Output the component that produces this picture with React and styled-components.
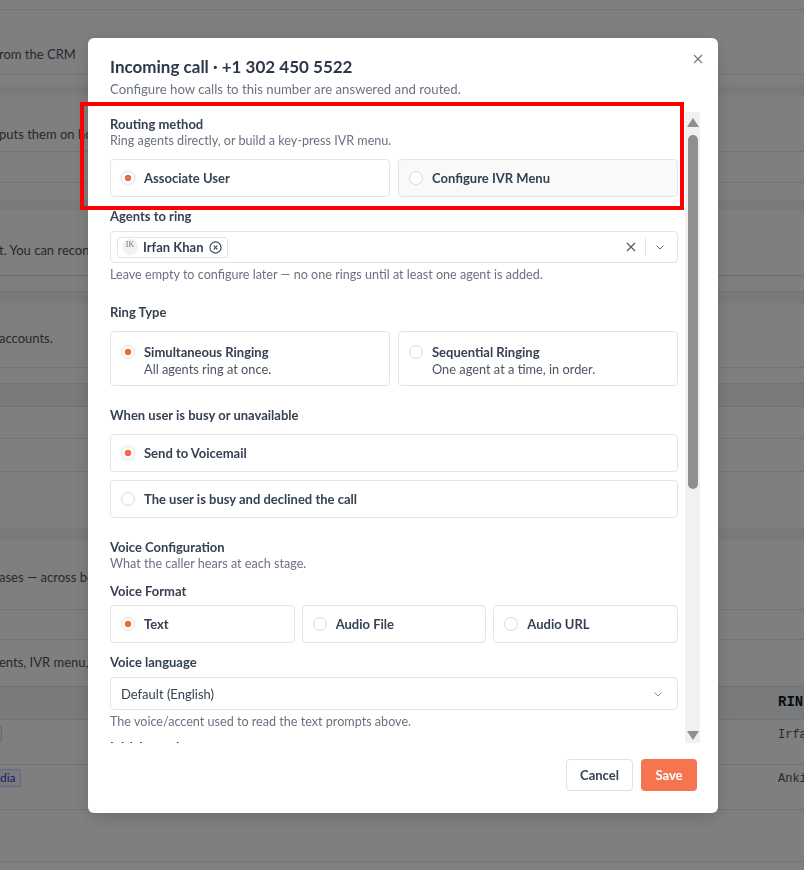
import React from "react";
import styled, { createGlobalStyle } from "styled-components";

const GlobalStyle = createGlobalStyle`
	html, body {
		margin: 0;
		padding: 0;
		height: 100%;
		overflow: hidden;
	}
	body {
		font-family: "Lato", "Liberation Sans", sans-serif;
		color: #364152;
		background: #ffffff;
	}
	* {
		box-sizing: border-box;
	}
`;

// background page rows (dimmed by the overlay)
const bgRows = [
	{ h: 10, line: true },
	{ h: 65, line: true, pt: 36, left: "rom the CRM" },
	{ h: 10 },
	{ h: 10, band: true },
	{ h: 57, line: true, pt: 31, left: "puts them on ho" },
	{ h: 31, line: true },
	{ h: 17 },
	{ h: 10, band: true },
	{ h: 66, line: true, red: true, pt: 32, left: "t. You can recon" },
	{ h: 16, line: true },
	{ h: 11, band: true },
	{ h: 65, line: true, pt: 27, left: "accounts." },
	{ h: 16, line: true },
	{ h: 23, band: true, line: true },
	{ h: 32, line: true },
	{ h: 33, line: true },
	{ h: 56 },
	{ h: 12, band: true },
	{ h: 70, line: true, pt: 29, left: "ases — across bo" },
	{ h: 30, line: true },
	{ h: 47, line: true, pt: 14, left: "ents, IVR menu," },
	{ h: 33, band: true, line: true, pt: 5, right: "RIN", head: true },
	{ h: 45, line: true, pt: 5, badge: " ", right: "Irfan" },
	{ h: 45, line: true, pt: 4, badge: "dia", right: "Anki" },
	{ h: 52, line: true },
	{ h: 8 },
];

const formats = ["Text", "Audio File", "Audio URL"];

const Chevron = ({ color = "#777" }) => (
	<svg width="10" height="10" viewBox="0 0 10 10">
		<path d="M1.5 3.5L5 7L8.5 3.5" stroke={color} strokeWidth="1" fill="none" />
	</svg>
);

export default function App() {
	return (
		<>
			<GlobalStyle />
			<BgPage>
				{bgRows.map((r, i) => (
					<BgRow key={i} $h={r.h} $pt={r.pt} $band={r.band} $line={r.line} $red={r.red}>
						<BgLeft>
							{r.left}
							{r.badge && <BgBadge $empty={r.badge === " "}>{r.badge}</BgBadge>}
						</BgLeft>
						{r.right && <BgRight $head={r.head}>{r.right}</BgRight>}
					</BgRow>
				))}
			</BgPage>

			<Overlay>
				<Modal>
					<CloseButton aria-label="Close">
						<svg width="10" height="10" viewBox="0 0 10 10">
							<path d="M1 1L9 9M9 1L1 9" stroke="#6b7280" strokeWidth="1.1" fill="none" />
						</svg>
					</CloseButton>
					<Header>
						<Title>Incoming call · +1 302 450 5522</Title>
						<Subtitle>Configure how calls to this number are answered and routed.</Subtitle>
					</Header>

					<Body>
						<ScrollView>
							<Label>Routing method</Label>
							<Hint>Ring agents directly, or build a key-press IVR menu.</Hint>
							<OptionGrid $cols={2} $mt={10}>
								<Option>
									<Radio $checked />
									<OptionTitle>Associate User</OptionTitle>
								</Option>
								<Option $muted>
									<Radio />
									<OptionTitle>Configure IVR Menu</OptionTitle>
								</Option>
							</OptionGrid>

							<Label $mt={10}>Agents to ring</Label>
							<MultiSelect $mt={6}>
								<Chip>
									<Avatar>IK</Avatar>
									<ChipName>Irfan Khan</ChipName>
									<svg width="13" height="13" viewBox="0 0 13 13">
										<circle cx="6.5" cy="6.5" r="5.6" stroke="#374151" strokeWidth="1.1" fill="none" />
										<path d="M4.7 4.7L8.3 8.3M8.3 4.7L4.7 8.3" stroke="#374151" strokeWidth="1.1" />
									</svg>
								</Chip>
								<SelectTools>
									<svg width="10" height="10" viewBox="0 0 10 10">
										<path d="M1 1L9 9M9 1L1 9" stroke="#555" strokeWidth="1.1" fill="none" />
									</svg>
									<Divider />
									<Chevron color="#666" />
								</SelectTools>
							</MultiSelect>
							<Hint $mt={4}>
								Leave empty to configure later — no one rings until at least one agent is added.
							</Hint>

							<Label $mt={20}>Ring Type</Label>
							<OptionGrid $cols={2} $mt={10}>
								<Option $tall>
									<Radio $checked $tall />
									<div>
										<OptionTitle>Simultaneous Ringing</OptionTitle>
										<OptionDesc>All agents ring at once.</OptionDesc>
									</div>
								</Option>
								<Option $tall>
									<Radio $tall />
									<div>
										<OptionTitle>Sequential Ringing</OptionTitle>
										<OptionDesc>One agent at a time, in order.</OptionDesc>
									</div>
								</Option>
							</OptionGrid>

							<Label $mt={20}>When user is busy or unavailable</Label>
							<OptionStack $mt={10}>
								<Option>
									<Radio $checked />
									<OptionTitle>Send to Voicemail</OptionTitle>
								</Option>
								<Option>
									<Radio />
									<OptionTitle>The user is busy and declined the call</OptionTitle>
								</Option>
							</OptionStack>

							<Label $mt={20}>Voice Configuration</Label>
							<Hint>What the caller hears at each stage.</Hint>

							<Label $mt={10}>Voice Format</Label>
							<OptionGrid $cols={3} $gap={7} $mt={5}>
								{formats.map((f, i) => (
									<Option key={f}>
										<Radio $checked={i === 0} />
										<OptionTitle>{f}</OptionTitle>
									</Option>
								))}
							</OptionGrid>

							<Label $mt={10}>Voice language</Label>
							<SelectBox $mt={6}>
								<span>Default (English)</span>
								<Chevron color="#8a8f98" />
							</SelectBox>
							<Hint $mt={4}>The voice/accent used to read the text prompts above.</Hint>

							<Label $mt={8}>Initial greeting</Label>
							<TextArea $mt={6} defaultValue="Thanks for calling. Please hold while we connect you." />
							<Hint $mt={4}>Played as soon as the call is answered.</Hint>

							<Label $mt={12}>Voicemail prompt</Label>
							<TextArea $mt={6} defaultValue="Sorry, no one is available. Please leave a message after the tone." />
							<Hint $mt={4}>Played before the caller records a voicemail.</Hint>

							<Label $mt={12}>Busy message</Label>
							<TextArea $mt={6} defaultValue="All our agents are busy right now. Please try again later." />
							<Hint $mt={4}>Played when the call is declined.</Hint>
						</ScrollView>

						<ScrollTrack>
							<ArrowUp />
							<Thumb />
							<ArrowDown />
						</ScrollTrack>
					</Body>

					<Footer>
						<GhostButton>Cancel</GhostButton>
						<PrimaryButton>Save</PrimaryButton>
					</Footer>
				</Modal>
				<Annotation />
			</Overlay>
		</>
	);
}

// * background page

const BgPage = styled.div`
	display: flex;
	flex-direction: column;
	height: 870px;
	overflow: hidden;
	background: #ffffff;
`;

const BgRow = styled.div`
	flex: 0 0 ${(p) => p.$h}px;
	display: flex;
	justify-content: space-between;
	align-items: flex-start;
	padding-top: ${(p) => p.$pt || 0}px;
	background: ${(p) => (p.$band ? "#f3f4f6" : "#ffffff")};
	border-bottom: ${(p) => (p.$line ? `1px solid ${p.$red ? "#f0d4d4" : "#e5e7eb"}` : "none")};
	overflow: hidden;
`;

const BgLeft = styled.div`
	font-size: 13px;
	line-height: 16px;
	color: #4b5563;
	white-space: nowrap;
	margin-left: -1px;
`;

const BgBadge = styled.span`
	display: inline-block;
	margin-left: ${(p) => (p.$empty ? "-20px" : "-4px")};
	width: ${(p) => (p.$empty ? "23px" : "auto")};
	height: 18px;
	padding: 0 4px;
	font-size: 12px;
	line-height: 16px;
	color: #4338ca;
	background: #eef2ff;
	border: 1px solid #c7d2fe;
	border-radius: 3px;
`;

const BgRight = styled.div`
	width: 26px;
	overflow: hidden;
	white-space: nowrap;
	font-family: "Liberation Mono", "DejaVu Sans Mono", monospace;
	font-size: ${(p) => (p.$head ? "14px" : "12px")};
	font-weight: ${(p) => (p.$head ? 700 : 400)};
	line-height: 16px;
	color: ${(p) => (p.$head ? "#111827" : "#4b5563")};
	padding-top: 2px;
`;

// * modal

const Overlay = styled.div`
	position: fixed;
	inset: 0;
	background: rgba(0, 0, 0, 0.5);
	display: flex;
	justify-content: center;
	align-items: flex-start;
	padding: 38px 0 0 2px;
`;

const Annotation = styled.div`
	position: absolute;
	left: 80px;
	top: 102px;
	width: 604px;
	height: 108px;
	border: 4px solid #ff0000;
	pointer-events: none;
`;

const Modal = styled.div`
	position: relative;
	width: 630px;
	height: 775px;
	background: #ffffff;
	border-radius: 6px;
	box-shadow: 0 4px 16px rgba(0, 0, 0, 0.15);
	display: flex;
	flex-direction: column;
`;

const CloseButton = styled.button`
	position: absolute;
	top: 14px;
	right: 13px;
	width: 14px;
	height: 14px;
	padding: 0;
	border: none;
	background: none;
	display: flex;
	align-items: center;
	justify-content: center;
`;

const Header = styled.div`
	padding: 18px 40px 0 22px;
	margin-bottom: 14px;
`;

const Title = styled.div`
	font-size: 17px;
	line-height: 22px;
	font-weight: 700;
	color: #2d3648;
`;

const Subtitle = styled.div`
	margin-top: 2px;
	font-size: 13.2px;
	line-height: 18px;
	color: #6b7280;
`;

const Body = styled.div`
	flex: 0 0 631px;
	display: flex;
	margin: 0 18px 0 22px;
	overflow: hidden;
`;

const ScrollView = styled.div`
	flex: 1;
	padding: 3px 7px 0 0;
	overflow: hidden;
`;

const ScrollTrack = styled.div`
	flex: 0 0 15px;
	display: flex;
	flex-direction: column;
	align-items: center;
	background: #f1f1f1;
`;

const ArrowUp = styled.span`
	margin-top: 6px;
	width: 0;
	height: 0;
	border-left: 6px solid transparent;
	border-right: 6px solid transparent;
	border-bottom: 9px solid #8e8e8e;
`;

const Thumb = styled.span`
	margin-top: 8px;
	width: 10px;
	height: 354px;
	border-radius: 5px;
	background: #8f8f8f;
`;

const ArrowDown = styled.span`
	margin-top: auto;
	margin-bottom: 3px;
	width: 0;
	height: 0;
	border-left: 6px solid transparent;
	border-right: 6px solid transparent;
	border-top: 9px solid #8e8e8e;
`;

const Label = styled.div`
	margin-top: ${(p) => p.$mt || 0}px;
	font-size: 13px;
	line-height: 18px;
	font-weight: 700;
	color: #364152;
`;

const Hint = styled.div`
	margin-top: ${(p) => p.$mt || 0}px;
	font-size: 12.6px;
	line-height: 16px;
	color: #6b7280;
`;

const OptionGrid = styled.div`
	margin-top: ${(p) => p.$mt || 0}px;
	display: grid;
	grid-template-columns: repeat(${(p) => p.$cols}, 1fr);
	gap: ${(p) => p.$gap || 8}px;
`;

const OptionStack = styled.div`
	margin-top: ${(p) => p.$mt || 0}px;
	display: flex;
	flex-direction: column;
	gap: 8px;
`;

const Option = styled.div`
	display: flex;
	align-items: ${(p) => (p.$tall ? "flex-start" : "center")};
	gap: 9px;
	height: ${(p) => (p.$tall ? "55px" : "38px")};
	padding: ${(p) => (p.$tall ? "11px 10px 0" : "0 10px")};
	border: 1px solid #e2e4e8;
	border-radius: 4px;
	background: ${(p) => (p.$muted ? "#f9f9fa" : "#ffffff")};
`;

const Radio = styled.span`
	flex: 0 0 14px;
	width: 14px;
	height: 14px;
	margin-top: ${(p) => (p.$tall ? "2px" : "0")};
	border-radius: 50%;
	border: 1px solid ${(p) => (p.$checked ? "#e5e7eb" : "#d6d9de")};
	background: ${(p) =>
		p.$checked ? "radial-gradient(circle, #ef6a45 0 3px, #ffffff 3.6px)" : "#ffffff"};
	box-shadow: ${(p) => (p.$checked ? "0 0 0 1px #f3f4f6" : "none")};
`;

const OptionTitle = styled.div`
	font-size: 13px;
	line-height: 18px;
	font-weight: 700;
	color: #364152;
`;

const OptionDesc = styled.div`
	font-size: 12.8px;
	line-height: 16px;
	color: #4b5563;
`;

const MultiSelect = styled.div`
	margin-top: ${(p) => p.$mt || 0}px;
	height: 32px;
	display: flex;
	align-items: center;
	justify-content: space-between;
	padding: 0 12px 0 6px;
	border: 1px solid #e2e4e8;
	border-radius: 4px;
`;

const Chip = styled.div`
	display: flex;
	align-items: center;
	gap: 5px;
	height: 21px;
	padding: 0 5px 0 4px;
	border: 1px solid #e2e4e8;
	border-radius: 3px;
`;

const Avatar = styled.span`
	width: 16px;
	height: 16px;
	border-radius: 50%;
	background: #f1f2f4;
	font-family: "Liberation Serif", serif;
	font-size: 8px;
	line-height: 11px;
	text-align: center;
	color: #6b7280;
`;

const ChipName = styled.span`
	font-size: 13px;
	font-weight: 700;
	color: #364152;
`;

const SelectTools = styled.div`
	display: flex;
	align-items: center;
	gap: 9px;
`;

const Divider = styled.span`
	width: 1px;
	height: 18px;
	background: #e2e4e8;
`;

const SelectBox = styled.div`
	margin-top: ${(p) => p.$mt || 0}px;
	height: 33px;
	display: flex;
	align-items: center;
	justify-content: space-between;
	padding: 0 14px 0 10px;
	border: 1px solid #e2e4e8;
	border-radius: 4px;
	font-size: 13px;
	color: #364152;
`;

const TextArea = styled.textarea`
	display: block;
	width: 100%;
	height: 72px;
	margin-top: ${(p) => p.$mt || 0}px;
	resize: none;
	padding: 8px 10px;
	border: 1px solid #e2e4e8;
	border-radius: 4px;
	font-family: inherit;
	font-size: 13px;
	color: #364152;
`;

const Footer = styled.div`
	display: flex;
	justify-content: flex-end;
	gap: 8px;
	padding: 16px 21px 0 0;
`;

const GhostButton = styled.button`
	width: 67px;
	height: 32px;
	border: 1px solid #dfe1e5;
	border-radius: 4px;
	background: #ffffff;
	font-family: inherit;
	font-size: 13px;
	font-weight: 700;
	color: #364152;
`;

const PrimaryButton = styled.button`
	width: 56px;
	height: 32px;
	border: none;
	border-radius: 4px;
	background: #f47550;
	font-family: inherit;
	font-size: 13px;
	font-weight: 700;
	color: #ffffff;
`;
